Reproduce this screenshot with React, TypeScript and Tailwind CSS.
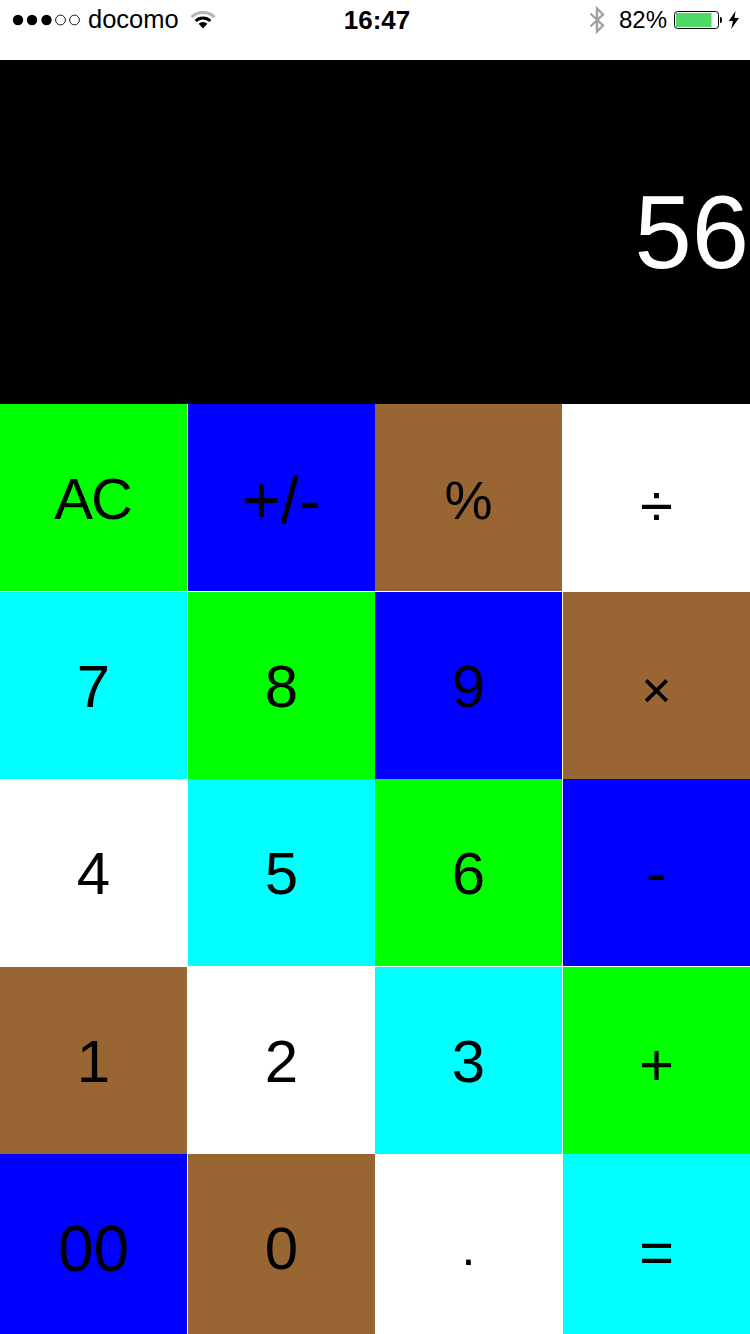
import React from 'react';

const GREEN = 'bg-[#00ff00]';
const BLUE = 'bg-[#0000ff]';
const BROWN = 'bg-[#996633]';
const WHITE = 'bg-white';
const CYAN = 'bg-[#00ffff]';

// type is tuned key by key, the reference font has other proportions
const DIGIT = 'text-[60px] pt-[2px]';

const rows: { label: string; bg: string; type: string }[][] = [
  [
    { label: 'AC', bg: GREEN, type: 'text-[58px] tracking-[-2px] pr-[2px] pt-[2px]' },
    { label: '+/-', bg: BLUE, type: 'text-[66px] pt-[4px]' },
    { label: '%', bg: BROWN, type: 'text-[54px] pt-[4px]' },
    { label: '÷', bg: WHITE, type: 'text-[60px] pt-[16px]' },
  ],
  [
    { label: '7', bg: CYAN, type: DIGIT },
    { label: '8', bg: GREEN, type: DIGIT },
    { label: '9', bg: BLUE, type: DIGIT },
    { label: '×', bg: BROWN, type: 'text-[52px] pt-[8px]' },
  ],
  [
    { label: '4', bg: WHITE, type: DIGIT },
    { label: '5', bg: CYAN, type: DIGIT },
    { label: '6', bg: GREEN, type: DIGIT },
    { label: '-', bg: BLUE, type: 'text-[64px] pt-[1px]' },
  ],
  [
    { label: '1', bg: BROWN, type: DIGIT },
    { label: '2', bg: WHITE, type: DIGIT },
    { label: '3', bg: CYAN, type: DIGIT },
    { label: '+', bg: GREEN, type: 'text-[60px] pt-[8px]' },
  ],
  [
    { label: '00', bg: BLUE, type: 'text-[64px] pt-[2px]' },
    { label: '0', bg: BROWN, type: DIGIT },
    { label: '.', bg: WHITE, type: 'text-[50px]' },
    { label: '=', bg: CYAN, type: 'text-[60px] pt-[10px]' },
  ],
];

function SignalDots() {
  return (
    <svg width="70" height="14" viewBox="0 0 70 14" className="block">
      <circle cx="6" cy="7" r="5.2" fill="#000" />
      <circle cx="20" cy="7" r="5.2" fill="#000" />
      <circle cx="34.5" cy="7" r="5.2" fill="#000" />
      <circle cx="48.5" cy="7" r="4.9" fill="none" stroke="#000" strokeWidth="0.9" />
      <circle cx="62.5" cy="7" r="4.9" fill="none" stroke="#000" strokeWidth="0.9" />
    </svg>
  );
}

function Wifi() {
  return (
    <svg width="26" height="18" viewBox="0 0 26 18" className="block">
      <path d="M1.5 6.2 A16.5 16.5 0 0 1 24.5 6.2" fill="none" stroke="#b4b4b4" strokeWidth="3" />
      <path d="M5.6 10 A10.6 10.6 0 0 1 20.4 10" fill="none" stroke="#000" strokeWidth="3" />
      <path d="M13 17.5 L8.6 12.8 A6.4 6.4 0 0 1 17.4 12.8 Z" fill="#000" />
    </svg>
  );
}

function Bluetooth() {
  return (
    <svg width="16" height="28" viewBox="0 0 16 28" className="block">
      <path
        d="M1.5 7.5 L14 19.5 L8 25.5 L8 2.5 L14 8.5 L1.5 20.5"
        fill="none"
        stroke="#a0a0a0"
        strokeWidth="2.4"
      />
    </svg>
  );
}

function Battery() {
  return (
    <svg width="48" height="18" viewBox="0 0 48 18" className="block">
      <rect x="0.5" y="0.5" width="44" height="17" rx="3" fill="none" stroke="#000" strokeWidth="1" />
      <rect x="2" y="2" width="35.5" height="14" fill="#4cd964" />
      <path d="M46 6 L46.5 6 A1.5 3 0 0 1 46.5 12 L46 12 Z" fill="#000" />
    </svg>
  );
}

function Bolt() {
  return (
    <svg width="12" height="18" viewBox="0 0 12 18" className="block">
      <path d="M7.5 0 L0.8 10 L5 10 L3.2 18 L11 7 L6.5 7 Z" fill="#000" />
    </svg>
  );
}

function StatusBar() {
  return (
    <div className="grid h-[60px] grid-cols-[1fr_auto_1fr] bg-white pb-[20px] leading-none text-black">
      <div className="flex items-center text-[25.5px]">
        <div className="ml-[12px]">
          <SignalDots />
        </div>
        <span className="ml-[6px]">docomo</span>
        <div className="ml-[11px]">
          <Wifi />
        </div>
      </div>
      <div className="flex items-center pl-[4px] text-[26px] font-bold">16:47</div>
      <div className="flex items-center justify-end pr-[10px] text-[24px]">
        <Bluetooth />
        <span className="ml-[14px]">82%</span>
        <div className="ml-[7px]">
          <Battery />
        </div>
        <div className="ml-[6px]">
          <Bolt />
        </div>
      </div>
    </div>
  );
}

export default function App() {
  return (
    <div className="h-[1334px] w-[750px] overflow-hidden bg-white font-['Liberation_Sans',Arial,sans-serif]">
      <StatusBar />
      <div className="flex h-[344px] items-center justify-end bg-black pr-[1px] text-[103px] leading-none text-white">
        56
      </div>
      <div className="grid grid-cols-[188px_187px_188px_187px] grid-rows-[188px_187px_188px_187px_187px] bg-white">
        {rows.map((row, r) =>
          row.map((key, c) => (
            <div
              key={key.label}
              className={`flex items-center justify-center border-white leading-none text-black ${key.type} ${key.bg} ${
                c % 2 === 0 ? 'border-r' : ''
              } ${r === 0 || r === 2 ? 'border-b' : ''}`}
            >
              {key.label}
            </div>
          )),
        )}
      </div>
    </div>
  );
}
